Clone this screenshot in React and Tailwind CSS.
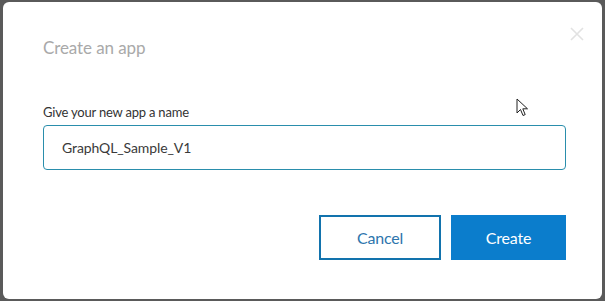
import React from "react";

export default function App() {
  return (
    <div className="w-[605px] h-[301px] bg-[#5a5a5a] pl-[3px] pr-[3px] pt-[2px] pb-[2px]" style={{ fontFamily: '"Source Sans Pro", Lato, "Noto Sans", sans-serif' }}>
      <div className="relative h-full w-full bg-white rounded-[6px] pl-[40px] pr-[36px] pt-[34px] flex flex-col">
        <div className="flex items-start justify-between">
          <h1 className="text-[17px] leading-[24px] tracking-[-0.1px] text-[#a9a9a9]">Create an app</h1>
          <svg className="absolute right-[18px] top-[25px]" width="14" height="14" viewBox="0 0 14 14">
            <path d="M1 1 L13 13 M13 1 L1 13" stroke="#e2e2e2" strokeWidth="1.6" />
          </svg>
        </div>
        <label className="mt-[42px] text-[13px] leading-[20px] tracking-[-0.2px] text-[#333]">Give your new app a name</label>
        <div className="mt-[3px] h-[45px] border border-[#2a8eac] rounded-[4px] flex items-center pl-[18px] text-[14px] tracking-[-0.1px] text-[#3a3a3a]">
          GraphQL_Sample_V1
        </div>
        <div className="mt-[45px] flex justify-end gap-[10px]">
          <button className="w-[122px] h-[45px] border-2 border-[#1273ad] text-[#2d75ad] text-[16px] tracking-[-0.2px] bg-white">Cancel</button>
          <button className="w-[115px] h-[45px] bg-[#0b7dcc] text-white text-[16px] tracking-[-0.2px]">Create</button>
        </div>
        <svg className="absolute left-[513px] top-[96px]" width="14" height="20" viewBox="0 0 14 20">
          <path d="M1 1 L1 15 L4.5 11.5 L7 17.5 L9.2 16.6 L6.8 10.8 L11.5 10.8 Z" fill="white" stroke="#222" strokeWidth="1" strokeLinejoin="round" />
        </svg>
      </div>
    </div>
  );
}
